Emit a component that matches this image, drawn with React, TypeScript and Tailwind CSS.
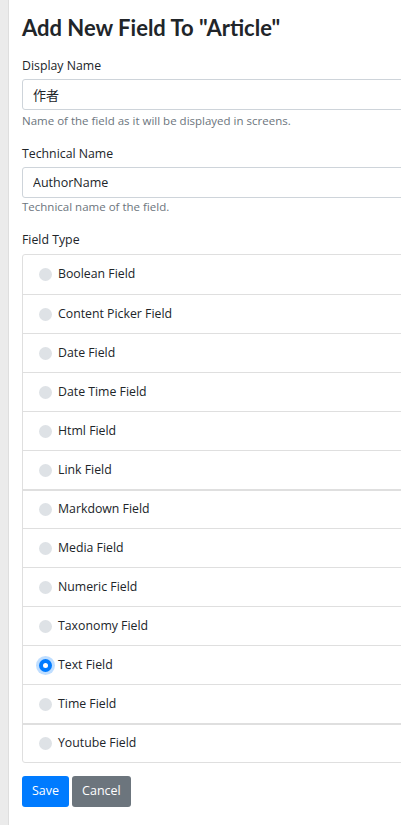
import { useState } from 'react';

const fieldTypes = [
  'Boolean Field',
  'Content Picker Field',
  'Date Field',
  'Date Time Field',
  'Html Field',
  'Link Field',
  'Markdown Field',
  'Media Field',
  'Numeric Field',
  'Taxonomy Field',
  'Text Field',
  'Time Field',
  'Youtube Field',
];

// rows that sit after a thicker divider
const thickTop = ['Markdown Field', 'Youtube Field'];

export default function App() {
  const [selected, setSelected] = useState('Text Field');

  return (
    <div
      className="flex min-h-[825px] bg-white text-[#212529] overflow-hidden"
      style={{ fontFamily: '"Open Sans", "Noto Sans CJK JP", sans-serif' }}
    >
      {/* Sidebar edge */}
      <div className="w-[9px] shrink-0 bg-[#ebebeb] border-r border-[#dedede]" />

      <div className="w-[440px] shrink-0 pl-[13px] pt-[14px]">
        <h1
          className="text-[22px] font-bold leading-[28px] mb-[15px]"
          style={{ fontFamily: 'Lato, "Open Sans", sans-serif' }}
        >
          Add New Field To "Article"
        </h1>

        {/* Display Name */}
        <div className="mb-[16px]">
          <label className="block text-[12.3px] leading-[18px] mb-[4px]">Display Name</label>
          <input
            defaultValue="作者"
            className="block w-full h-[31px] px-[10px] text-[13px] border border-[#ced4da] rounded-[3px] outline-none"
          />
          <p className="text-[11.5px] text-[#6c757d] mt-[3px] leading-[16px]">
            Name of the field as it will be displayed in screens.
          </p>
        </div>

        {/* Technical Name */}
        <div className="mb-[16px]">
          <label className="block text-[12.3px] leading-[18px] mb-[4px]">Technical Name</label>
          <input
            defaultValue="AuthorName"
            className="block w-full h-[31px] px-[10px] text-[12.5px] border border-[#ced4da] rounded-[3px] outline-none"
          />
          <p className="text-[11.5px] text-[#6c757d] mt-[1px] leading-[16px]">
            Technical name of the field.
          </p>
        </div>

        {/* Field Type */}
        <label className="block text-[12.3px] leading-[18px] mb-[5px]">Field Type</label>
        <ul className="border border-[#dfdfdf] rounded-[3px]">
          {fieldTypes.map((name, i) => {
            const checked = selected === name;
            const border =
              i === 0 ? '' : thickTop.includes(name) ? 'border-t-2 border-[#dfdfdf]' : 'border-t border-[#dfdfdf]';
            return (
              <li
                key={name}
                onClick={() => setSelected(name)}
                className={`flex items-center h-[39px] pl-[16px] cursor-pointer ${border}`}
              >
                {checked ? (
                  <span className="w-[13px] h-[13px] rounded-full bg-[#007bff] flex items-center justify-center shadow-[0_0_0_3px_rgba(0,123,255,0.25)]">
                    <span className="w-[5px] h-[5px] rounded-full bg-white" />
                  </span>
                ) : (
                  <span className="w-[13px] h-[13px] rounded-full bg-[#dee2e6]" />
                )}
                <span className="ml-[6px] text-[12.3px]">{name}</span>
              </li>
            );
          })}
        </ul>

        <div className="flex gap-[3px] mt-[13px]">
          <button className="h-[31px] px-[10px] bg-[#007bff] text-white text-[12.5px] rounded-[3px]">
            Save
          </button>
          <button className="h-[31px] px-[10px] bg-[#6c757d] text-white text-[12.5px] rounded-[3px]">
            Cancel
          </button>
        </div>
      </div>
    </div>
  );
}
